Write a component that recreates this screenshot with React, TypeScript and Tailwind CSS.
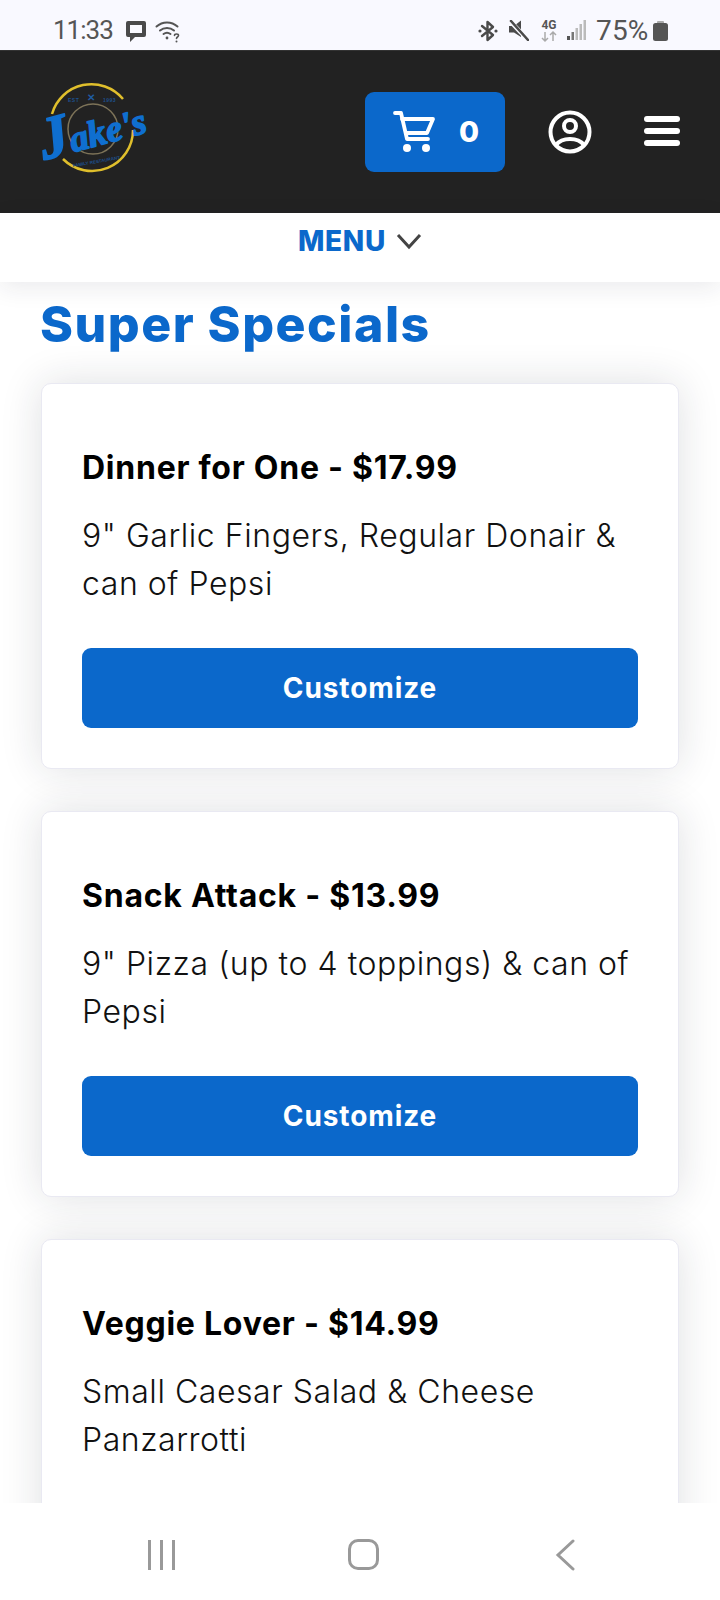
const specials = [
  { title: "Dinner for One - $17.99", body: "9\" Garlic Fingers, Regular Donair & can of Pepsi" },
  { title: "Snack Attack - $13.99", body: "9\" Pizza (up to 4 toppings) & can of Pepsi" },
  { title: "Veggie Lover - $14.99", body: "Small Caesar Salad & Cheese Panzarrotti" },
];

function StatusBar() {
  return (
    <div className="h-[50px] shrink-0 bg-[#f9f9ff] flex items-center justify-between pt-[11px] pl-[53px] pr-[52px] text-[#555] font-['Roboto',sans-serif] text-[26px]">
      <div className="flex items-center">
        <span className="w-[60px] tracking-[-1px]">11:33</span>
        <svg className="ml-[12px]" width="22" height="22" viewBox="0 0 22 22" fill="#4a4a4a">
          <path d="M3 1h16a2 2 0 0 1 2 2v12a2 2 0 0 1-2 2h-9l-5 5v-5H3a2 2 0 0 1-2-2V3a2 2 0 0 1 2-2z" />
          <rect x="5" y="5" width="12" height="8" fill="#f9f9ff" />
        </svg>
        <svg className="ml-[8px]" width="26" height="24" viewBox="0 0 26 24" fill="none" stroke="#555" strokeWidth="2" strokeLinecap="round">
          <path d="M1.5 7.5c6-5.500 15-5.500 21 0" />
          <path d="M5 11.500c4-3.500 10-3.500 14 0" />
          <path d="M8.500 15c2-1.500 5-1.500 7 0" />
          <circle cx="12" cy="19" r="1.400" fill="#555" stroke="none" />
          <path d="M19.500 16.500c0-2 4-2 4 0 0 1.500-2 1.500-2 3" strokeWidth="1.600" />
          <circle cx="21.500" cy="22.500" r="1" fill="#555" stroke="none" />
        </svg>
      </div>
      <div className="flex items-center">
        <svg width="20" height="22" viewBox="0 0 20 22" fill="none" stroke="#4a4a4a" strokeWidth="2.400" strokeLinejoin="round" strokeLinecap="round">
          <path d="M4 6l11 9-5.500 5V2L15 7 4 16" />
          <circle cx="2" cy="11" r="1.600" fill="#4a4a4a" stroke="none" />
          <circle cx="18" cy="11" r="1.600" fill="#4a4a4a" stroke="none" />
        </svg>
        <svg className="ml-[10px]" width="21" height="21" viewBox="0 0 21 21">
          <path d="M1 6h5l7-5.500v16.500l-7-4.500H1z" fill="#4a4a4a" />
          <path d="M2 1l17 18" stroke="#f9f9ff" strokeWidth="4.500" />
          <path d="M3 1l17 19" stroke="#4a4a4a" strokeWidth="2.600" strokeLinecap="round" />
        </svg>
        <svg className="ml-[11px]" width="18" height="24" viewBox="0 0 18 24" fill="none">
          <text x="9" y="10" textAnchor="middle" fontFamily="Roboto, sans-serif" fontWeight="700" fontSize="12" fill="#555">4G</text>
          <path d="M5 13v9M2 19l3 3 3-3" stroke="#aaa" strokeWidth="1.500" />
          <path d="M13 22v-9M10 16l3-3 3 3" stroke="#aaa" strokeWidth="1.500" />
        </svg>
        <svg className="ml-[9px]" width="20" height="22" viewBox="0 0 20 22">
          <rect x="0" y="16" width="3" height="4" fill="#555" />
          <rect x="4.500" y="12" width="2.500" height="8" fill="#777" />
          <rect x="8.500" y="8" width="2.500" height="12" fill="#bbb" />
          <rect x="12.500" y="4" width="2.500" height="16" fill="#bbb" />
          <rect x="16.500" y="0" width="2.500" height="20" fill="#bbb" />
        </svg>
        <span className="ml-[9px] w-[53px] text-[28px] tracking-[0.2px]">75%</span>
        <svg className="ml-[4px]" width="15" height="20" viewBox="0 0 15 20">
          <rect x="4" y="0" width="7" height="3" rx="1" fill="#aaa" />
          <rect x="0" y="2" width="15" height="18" rx="2.500" fill="#555" />
        </svg>
      </div>
    </div>
  );
}

function Logo() {
  return (
    <svg className="mb-[4px] overflow-visible" width="110" height="92" viewBox="0 0 110 92" fill="none">
      <path d="M11 30A41 41 0 0 1 82 15" stroke="#e0bf2c" strokeWidth="2.500" />
      <path d="M92 46A41 41 0 0 1 22 75" stroke="#e0bf2c" strokeWidth="2.500" />
      <circle cx="52" cy="45" r="25" stroke="#7d7358" strokeWidth="1.500" />
      <text x="27" y="18" fontFamily="'Liberation Sans', sans-serif" fontWeight="700" fontSize="5" fill="#1d4f8c" letterSpacing="0.5">EST</text>
      <text x="46" y="17" fontFamily="'Liberation Sans', sans-serif" fontWeight="700" fontSize="10" fill="#1f5ba0">✕</text>
      <text x="62" y="18" fontFamily="'Liberation Sans', sans-serif" fontWeight="700" fontSize="5" fill="#1d4f8c" letterSpacing="0.5">1993</text>
      <text x="31" y="80" fontFamily="'Liberation Sans', sans-serif" fontWeight="700" fontSize="4.500" fill="#1d4f8c" transform="rotate(-10 50 76)">FAMILY RESTAURANT</text>
      <text x="3" y="76" fontFamily="'Liberation Serif', serif" fontWeight="700" fontStyle="italic" fontSize="37" fill="#0f6fd0" stroke="#0f6fd0" strokeWidth="1.600" strokeLinejoin="round" transform="rotate(-15 3 76)">
        <tspan fontSize="60">J</tspan>ake's
      </text>
    </svg>
  );
}

function Header() {
  return (
    <header className="h-[163px] shrink-0 bg-[#222222] border-t border-[#333] flex items-center justify-between pl-[41px] pr-[40px]">
      <Logo />
      <div className="flex items-center">
        <button className="w-[140px] h-[80px] rounded-[9px] bg-[#0b68cb] flex items-center pl-[28px] text-white">
          <svg width="43" height="42" viewBox="0 0 43 42" fill="none" stroke="#fff" strokeWidth="3.800" strokeLinecap="round" strokeLinejoin="round">
            <path d="M2 2h6l6 26h21" />
            <path d="M9 8h31l-6 14H13" />
            <circle cx="14" cy="37" r="4" fill="#fff" stroke="none" />
            <circle cx="33" cy="37" r="4" fill="#fff" stroke="none" />
          </svg>
          <span className="ml-[23px] font-['Inter',sans-serif] font-extrabold text-[29px]">0</span>
        </button>
        <svg className="ml-[43px]" width="44" height="44" viewBox="0 0 44 44" fill="none" stroke="#fff" strokeWidth="4">
          <circle cx="22" cy="22" r="19.500" />
          <circle cx="22" cy="16" r="6" />
          <path d="M8 35c6-8 22-8 28 0" />
        </svg>
        <div className="ml-[52px] mb-[3px] w-[36px] flex flex-col gap-[6px]">
          <span className="h-[6px] rounded-full bg-white" />
          <span className="h-[6px] rounded-full bg-white" />
          <span className="h-[6px] rounded-full bg-white" />
        </div>
      </div>
    </header>
  );
}

function SpecialCard({ title, body }: { title: string; body: string }) {
  return (
    <div className="shrink-0 h-[386px] bg-white rounded-[10px] border border-[#e9e9f2] shadow-[0_0_42px_rgba(30,35,50,0.14)] px-[40px] pt-[60px] pb-[40px]">
      <h2 className="text-[32px] leading-[48px] font-bold text-black tracking-[0.75px]">{title}</h2>
      <p className="mt-[20px] text-[32px] leading-[48px] font-light text-[#111] tracking-[0.55px]">{body}</p>
      <button className="mt-[40px] w-full h-[80px] rounded-[9px] bg-[#0b68cb] text-white text-[28px] font-bold tracking-[0.9px]">Customize</button>
    </div>
  );
}

export default function App() {
  return (
    <div className="w-[720px] h-[1600px] bg-white flex flex-col overflow-hidden font-['Inter',sans-serif]">
      <StatusBar />
      <Header />
      <nav className="relative z-10 h-[69px] shrink-0 bg-white shadow-[0_6px_24px_rgba(30,35,50,0.09)] flex justify-center pt-[10px] gap-[10px]">
        <span className="text-[28px] leading-[36px] font-extrabold text-[#0b68cb] tracking-[0.7px]">MENU</span>
        <svg className="mt-[7px]" width="26" height="22" viewBox="0 0 26 22" fill="none" stroke="#444" strokeWidth="3">
          <path d="M2 5l11 12L24 5" />
        </svg>
      </nav>
      <main className="flex-1 min-h-0 overflow-hidden px-[41px] flex flex-col">
        <h1 className="mt-[12px] -ml-[1px] text-[50px] leading-[60px] font-extrabold text-[#0b68cb] tracking-[1.5px]">Super Specials</h1>
        <div className="mt-[29px] flex flex-col gap-[42px]">
          {specials.map((s) => (
            <SpecialCard key={s.title} title={s.title} body={s.body} />
          ))}
        </div>
      </main>
      <div className="relative z-10 h-[97px] shrink-0 bg-white flex items-start pt-[36px]">
        <div className="ml-[148px] mt-[1px] flex gap-[9px]">
          <span className="w-[3px] h-[30px] bg-[#999]" />
          <span className="w-[3px] h-[30px] bg-[#999]" />
          <span className="w-[3px] h-[30px] bg-[#999]" />
        </div>
        <span className="ml-[173px] w-[31px] h-[31px] rounded-[10px] border-[3px] border-[#999]" />
        <svg className="ml-[176px]" width="20" height="32" viewBox="0 0 20 32" fill="none" stroke="#999" strokeWidth="3" strokeLinecap="round">
          <path d="M18 2L3 16l15 14" />
        </svg>
      </div>
    </div>
  );
}
